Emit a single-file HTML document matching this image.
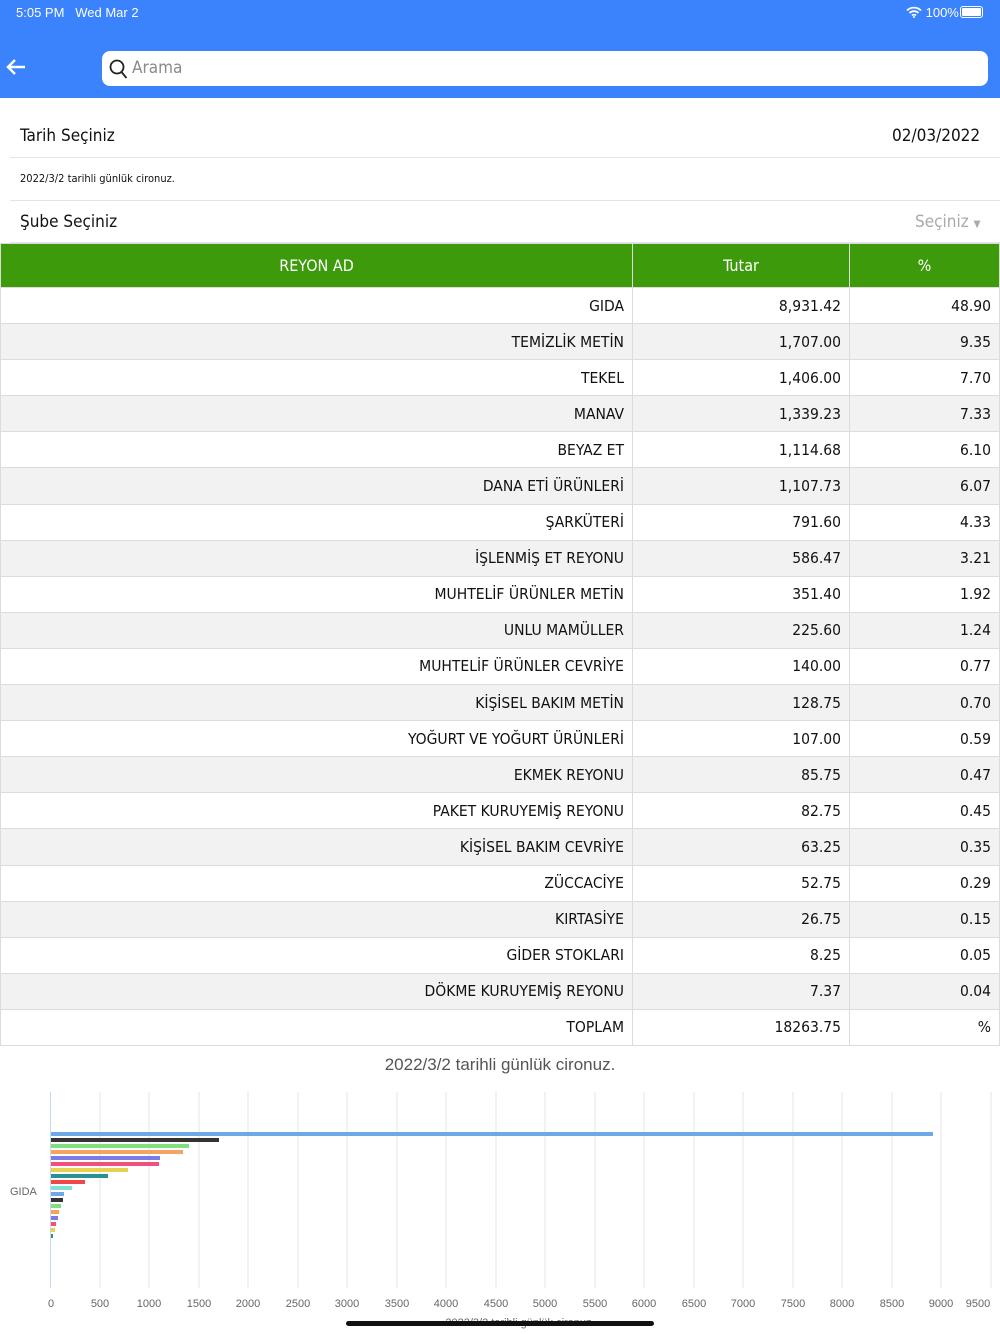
<!DOCTYPE html>
<html><head><meta charset="utf-8"><style>
*{margin:0;padding:0;box-sizing:border-box}
body{width:1000px;height:1334px;background:#fff;position:relative;overflow:hidden;font-family:"DejaVu Sans Condensed","Liberation Sans Narrow","Liberation Sans",sans-serif;color:#111}
.top{position:absolute;left:0;top:0;width:1000px;height:98px;background:#3b82fd}
.sb{position:absolute;top:5px;font-family:"Liberation Sans",sans-serif;font-size:13px;color:#fff}
.search{position:absolute;left:102px;top:51px;width:886px;height:35px;background:#fff;border-radius:8px}
.search span{position:absolute;left:30px;top:7px;font-size:17px;color:#8a8a8a}
.row1{position:absolute;left:20px;font-size:17px}
.hr{position:absolute;left:10px;right:0;height:1px;background:#e4e4e4}
table{position:absolute;left:0;top:243px;width:1000px;border-collapse:collapse;font-size:15.5px}
td,th{border:1px solid #dcdcdc;height:36.1px;text-align:right;padding-right:8px}
th{background:#3d9a0a;color:#fff;font-weight:normal;text-align:center;height:44px;padding:0;font-size:16px}
tr:nth-child(odd) td{background:#f2f2f2}
</style></head><body>
<div class="top">
<div class="sb" style="left:16px">5:05 PM&nbsp;&nbsp; Wed Mar 2</div>
<div class="sb" style="left:906px">
<svg width="16" height="12" viewBox="0 0 16 12" style="vertical-align:-1px"><path d="M1 4.5a10 10 0 0 1 14 0M3.5 7a6.5 6.5 0 0 1 9 0M6 9.5a3 3 0 0 1 4 0" stroke="#fff" stroke-width="1.8" fill="none"/><circle cx="8" cy="11" r="1" fill="#fff"/></svg> 100%</div>
<div style="position:absolute;left:960px;top:6px;width:23px;height:12px;border:1px solid #fff;border-radius:3px;padding:1px"><div style="background:#fff;width:100%;height:100%;border-radius:1px"></div></div>
<svg style="position:absolute;left:5px;top:57px" width="22" height="20" viewBox="0 0 22 20"><path d="M20 10H3M10 3L3 10l7 7" stroke="#fff" stroke-width="2.4" fill="none"/></svg>
<div class="search"><svg style="position:absolute;left:7px;top:8px" width="19" height="20" viewBox="0 0 19 20"><circle cx="8" cy="8" r="6.5" stroke="#222" stroke-width="1.8" fill="none"/><path d="M12.5 13l5 6" stroke="#222" stroke-width="1.8"/></svg><span>Arama</span></div>
</div>
<div class="row1" style="top:126px">Tarih Seçiniz</div>
<div class="row1" style="top:126px;left:892px">02/03/2022</div>
<div class="hr" style="top:157px"></div>
<div class="row1" style="top:172px;font-size:11px">2022/3/2 tarihli günlük cironuz.</div>
<div class="hr" style="top:200px"></div>
<div class="row1" style="top:212px">Şube Seçiniz</div>
<div class="row1" style="top:212px;left:915px;color:#aaa">Seçiniz <span style="font-size:10px">▼</span></div>
<div class="hr" style="top:242px"></div>
<table>
<tr><th style="width:632px">REYON AD</th><th style="width:217px">Tutar</th><th>%</th></tr>
<tr><td>GIDA</td><td>8,931.42</td><td>48.90</td></tr>
<tr><td>TEMİZLİK METİN</td><td>1,707.00</td><td>9.35</td></tr>
<tr><td>TEKEL</td><td>1,406.00</td><td>7.70</td></tr>
<tr><td>MANAV</td><td>1,339.23</td><td>7.33</td></tr>
<tr><td>BEYAZ ET</td><td>1,114.68</td><td>6.10</td></tr>
<tr><td>DANA ETİ ÜRÜNLERİ</td><td>1,107.73</td><td>6.07</td></tr>
<tr><td>ŞARKÜTERİ</td><td>791.60</td><td>4.33</td></tr>
<tr><td>İŞLENMİŞ ET REYONU</td><td>586.47</td><td>3.21</td></tr>
<tr><td>MUHTELİF ÜRÜNLER METİN</td><td>351.40</td><td>1.92</td></tr>
<tr><td>UNLU MAMÜLLER</td><td>225.60</td><td>1.24</td></tr>
<tr><td>MUHTELİF ÜRÜNLER CEVRİYE</td><td>140.00</td><td>0.77</td></tr>
<tr><td>KİŞİSEL BAKIM METİN</td><td>128.75</td><td>0.70</td></tr>
<tr><td>YOĞURT VE YOĞURT ÜRÜNLERİ</td><td>107.00</td><td>0.59</td></tr>
<tr><td>EKMEK REYONU</td><td>85.75</td><td>0.47</td></tr>
<tr><td>PAKET KURUYEMİŞ REYONU</td><td>82.75</td><td>0.45</td></tr>
<tr><td>KİŞİSEL BAKIM CEVRİYE</td><td>63.25</td><td>0.35</td></tr>
<tr><td>ZÜCCACİYE</td><td>52.75</td><td>0.29</td></tr>
<tr><td>KIRTASİYE</td><td>26.75</td><td>0.15</td></tr>
<tr><td>GİDER STOKLARI</td><td>8.25</td><td>0.05</td></tr>
<tr><td>DÖKME KURUYEMİŞ REYONU</td><td>7.37</td><td>0.04</td></tr>
<tr><td>TOPLAM</td><td>18263.75</td><td>%</td></tr>
</table>
<svg style="position:absolute;left:0;top:1046px" width="1000" height="288" viewBox="0 1046 1000 288" font-family="Liberation Sans, sans-serif">
<text x="500" y="1070" text-anchor="middle" font-size="17" fill="#555">2022/3/2 tarihli günlük cironuz.</text>
<g stroke="#e6e6e6" stroke-width="1">
<path d="M100 1092V1288M149 1092V1288M199 1092V1288M248 1092V1288M298 1092V1288M347 1092V1288M397 1092V1288M446 1092V1288M496 1092V1288M545 1092V1288M595 1092V1288M644 1092V1288M694 1092V1288M743 1092V1288M793 1092V1288M842 1092V1288M892 1092V1288M941 1092V1288M991 1092V1288"/>
</g>
<path d="M50.5 1092V1288" stroke="#c8d8f0"/>
<g>
<rect x="51" y="1132" width="882" height="4" fill="#6fa8e8"/>
<rect x="51" y="1138" width="168" height="4" fill="#333"/>
<rect x="51" y="1144" width="138" height="4" fill="#7ee07e"/>
<rect x="51" y="1150" width="132" height="4" fill="#f4a460"/>
<rect x="51" y="1156" width="109" height="4" fill="#7b7be8"/>
<rect x="51" y="1162" width="108" height="4" fill="#f0507a"/>
<rect x="51" y="1168" width="77" height="4" fill="#e8d050"/>
<rect x="51" y="1174" width="57" height="4" fill="#2a9090"/>
<rect x="51" y="1180" width="34" height="4" fill="#f04848"/>
<rect x="51" y="1186" width="21" height="4" fill="#80e0d8"/>
<rect x="51" y="1192" width="13" height="4" fill="#6fa8e8"/>
<rect x="51" y="1198" width="12" height="4" fill="#333"/>
<rect x="51" y="1204" width="10" height="4" fill="#7ee07e"/>
<rect x="51" y="1210" width="8" height="4" fill="#f4a460"/>
<rect x="51" y="1216" width="7" height="4" fill="#7b7be8"/>
<rect x="51" y="1222" width="5" height="4" fill="#f0507a"/>
<rect x="51" y="1228" width="4" height="4" fill="#e8d050"/>
<rect x="51" y="1234" width="2" height="4" fill="#2a9090"/>
</g>
<text x="10" y="1195" font-size="11" fill="#666">GIDA</text>
<g font-size="11" fill="#666" text-anchor="middle">
<text x="51" y="1307">0</text><text x="100" y="1307">500</text><text x="149" y="1307">1000</text><text x="199" y="1307">1500</text><text x="248" y="1307">2000</text><text x="298" y="1307">2500</text><text x="347" y="1307">3000</text><text x="397" y="1307">3500</text><text x="446" y="1307">4000</text><text x="496" y="1307">4500</text><text x="545" y="1307">5000</text><text x="595" y="1307">5500</text><text x="644" y="1307">6000</text><text x="694" y="1307">6500</text><text x="743" y="1307">7000</text><text x="793" y="1307">7500</text><text x="842" y="1307">8000</text><text x="892" y="1307">8500</text><text x="941" y="1307">9000</text><text x="978" y="1307">9500</text>
<text x="520" y="1326">2022/3/2 tarihli günlük cironuz.</text>
</g>
<rect x="346" y="1321" width="308" height="5" rx="2.5" fill="#111"/>
</svg>
</body></html>
